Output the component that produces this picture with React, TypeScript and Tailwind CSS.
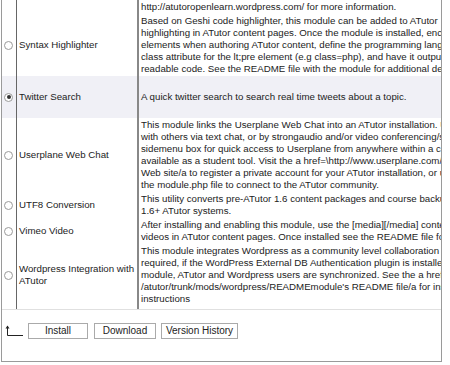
type Row = { name: string[]; lines: string[]; checked?: boolean; h?: string; hl?: boolean; radio?: boolean };

const rows: Row[] = [
  {
    name: [],
    radio: false,
    lines: ['http://atutoropenlearn.wordpress.com/ for more information.'],
  },
  {
    name: ['Syntax Highlighter'],
    lines: [
      'Based on Geshi code highlighter, this module can be added to ATutor',
      'highlighting in ATutor content pages. Once the module is installed, enclose code',
      'elements when authoring ATutor content, define the programming language in the',
      'class attribute for the lt;pre element (e.g class=php), and have it output nicely',
      'readable code. See the README file with the module for additional details.',
    ],
  },
  {
    name: ['Twitter Search'],
    checked: true,
    hl: true,
    h: 'h-[42px]',
    lines: ['A quick twitter search to search real time tweets about a topic.'],
  },
  {
    name: ['Userplane Web Chat'],
    lines: [
      'This module links the Userplane Web Chat into an ATutor installation. Users can chat',
      'with others via text chat, or by strongaudio and/or video conferencing/strong. A',
      'sidemenu box for quick access to Userplane from anywhere within a course is also',
      'available as a student tool. Visit the a href=\\http://www.userplane.com/\\ Userplane',
      'Web site/a to register a private account for your ATutor installation, or use the',
      'the module.php file to connect to the ATutor community.',
    ],
  },
  {
    name: ['UTF8 Conversion'],
    lines: [
      'This utility converts pre-ATutor 1.6 content packages and course backups to',
      '1.6+ ATutor systems.',
    ],
  },
  {
    name: ['Vimeo Video'],
    lines: [
      'After installing and enabling this module, use the [media][/media] content tags',
      'videos in ATutor content pages. Once installed see the README file for details.',
    ],
  },
  {
    name: ['Wordpress Integration with', 'ATutor'],
    lines: [
      'This module integrates Wordpress as a community level collaboration tool. It is',
      'required, if the WordPress External DB Authentication plugin is installed, that the',
      'module, ATutor and Wordpress users are synchronized. See the a href=',
      "/atutor/trunk/mods/wordpress/READMEmodule's README file/a for installation",
      'instructions',
    ],
  },
];

function Radio({ checked }: { checked?: boolean }) {
  return (
    <span className="flex h-[9px] w-[9px] items-center justify-center rounded-full border border-[#9a9a9a] bg-white">
      {checked && <span className="h-[4px] w-[4px] rounded-full bg-[#333]" />}
    </span>
  );
}

export default function App() {
  return (
    <div className="h-[365px] w-[450px] bg-white font-['Liberation_Sans',Arial,sans-serif] text-[9.7px] leading-[12px] text-[#222]">
      <div className="ml-px flex h-[362px] w-[441px] flex-col overflow-hidden border-x border-b border-[#9a9a9a]">
        <div className="flex flex-col">
          {rows.map((r, i) => (
            <div key={i} className={`flex ${r.hl ? 'bg-[#f0f0f6]' : ''} ${r.h ?? ''}`}>
              <div className="flex w-[15px] shrink-0 items-center justify-center border-r border-[#666] pr-px">
                {r.radio !== false && <Radio checked={r.checked} />}
              </div>
              <div className="flex w-[122px] shrink-0 flex-col justify-center border-r-2 border-[#888] px-[2px]">
                {r.name.map((n) => (
                  <div key={n} className="whitespace-nowrap">{n}</div>
                ))}
              </div>
              <div className="flex min-w-0 flex-1 flex-col justify-center overflow-hidden whitespace-nowrap py-px pl-[2px]">
                {r.lines.map((l) => (
                  <div key={l}>{l}</div>
                ))}
              </div>
            </div>
          ))}
          <div className="flex h-[3px]">
            <div className="w-[15px] border-r border-[#666]" />
            <div className="w-[122px] border-r-2 border-[#888]" />
          </div>
        </div>
        <div className="flex items-center gap-[4px] border-t border-[#e0e0e0] pl-[2px] pt-[13px] text-[10px]">
          <svg width="20" height="14" viewBox="0 0 20 14" className="shrink-0">
            <path d="M3.5 2 V11.5 H19" fill="none" stroke="#222" strokeWidth="1" />
            <path d="M1.5 4.5 L3.5 1.5 L5.5 4.5 Z" fill="#222" />
          </svg>
          <button className="h-[16px] w-[60px] border border-[#aaa] bg-white leading-[14px] text-[#222]">Install</button>
          <button className="ml-[2px] h-[16px] w-[62px] border border-[#aaa] bg-white leading-[14px] text-[#222]">Download</button>
          <button className="ml-px h-[16px] w-[77px] border border-[#aaa] bg-white leading-[14px] text-[#222]">Version History</button>
        </div>
      </div>
    </div>
  );
}
